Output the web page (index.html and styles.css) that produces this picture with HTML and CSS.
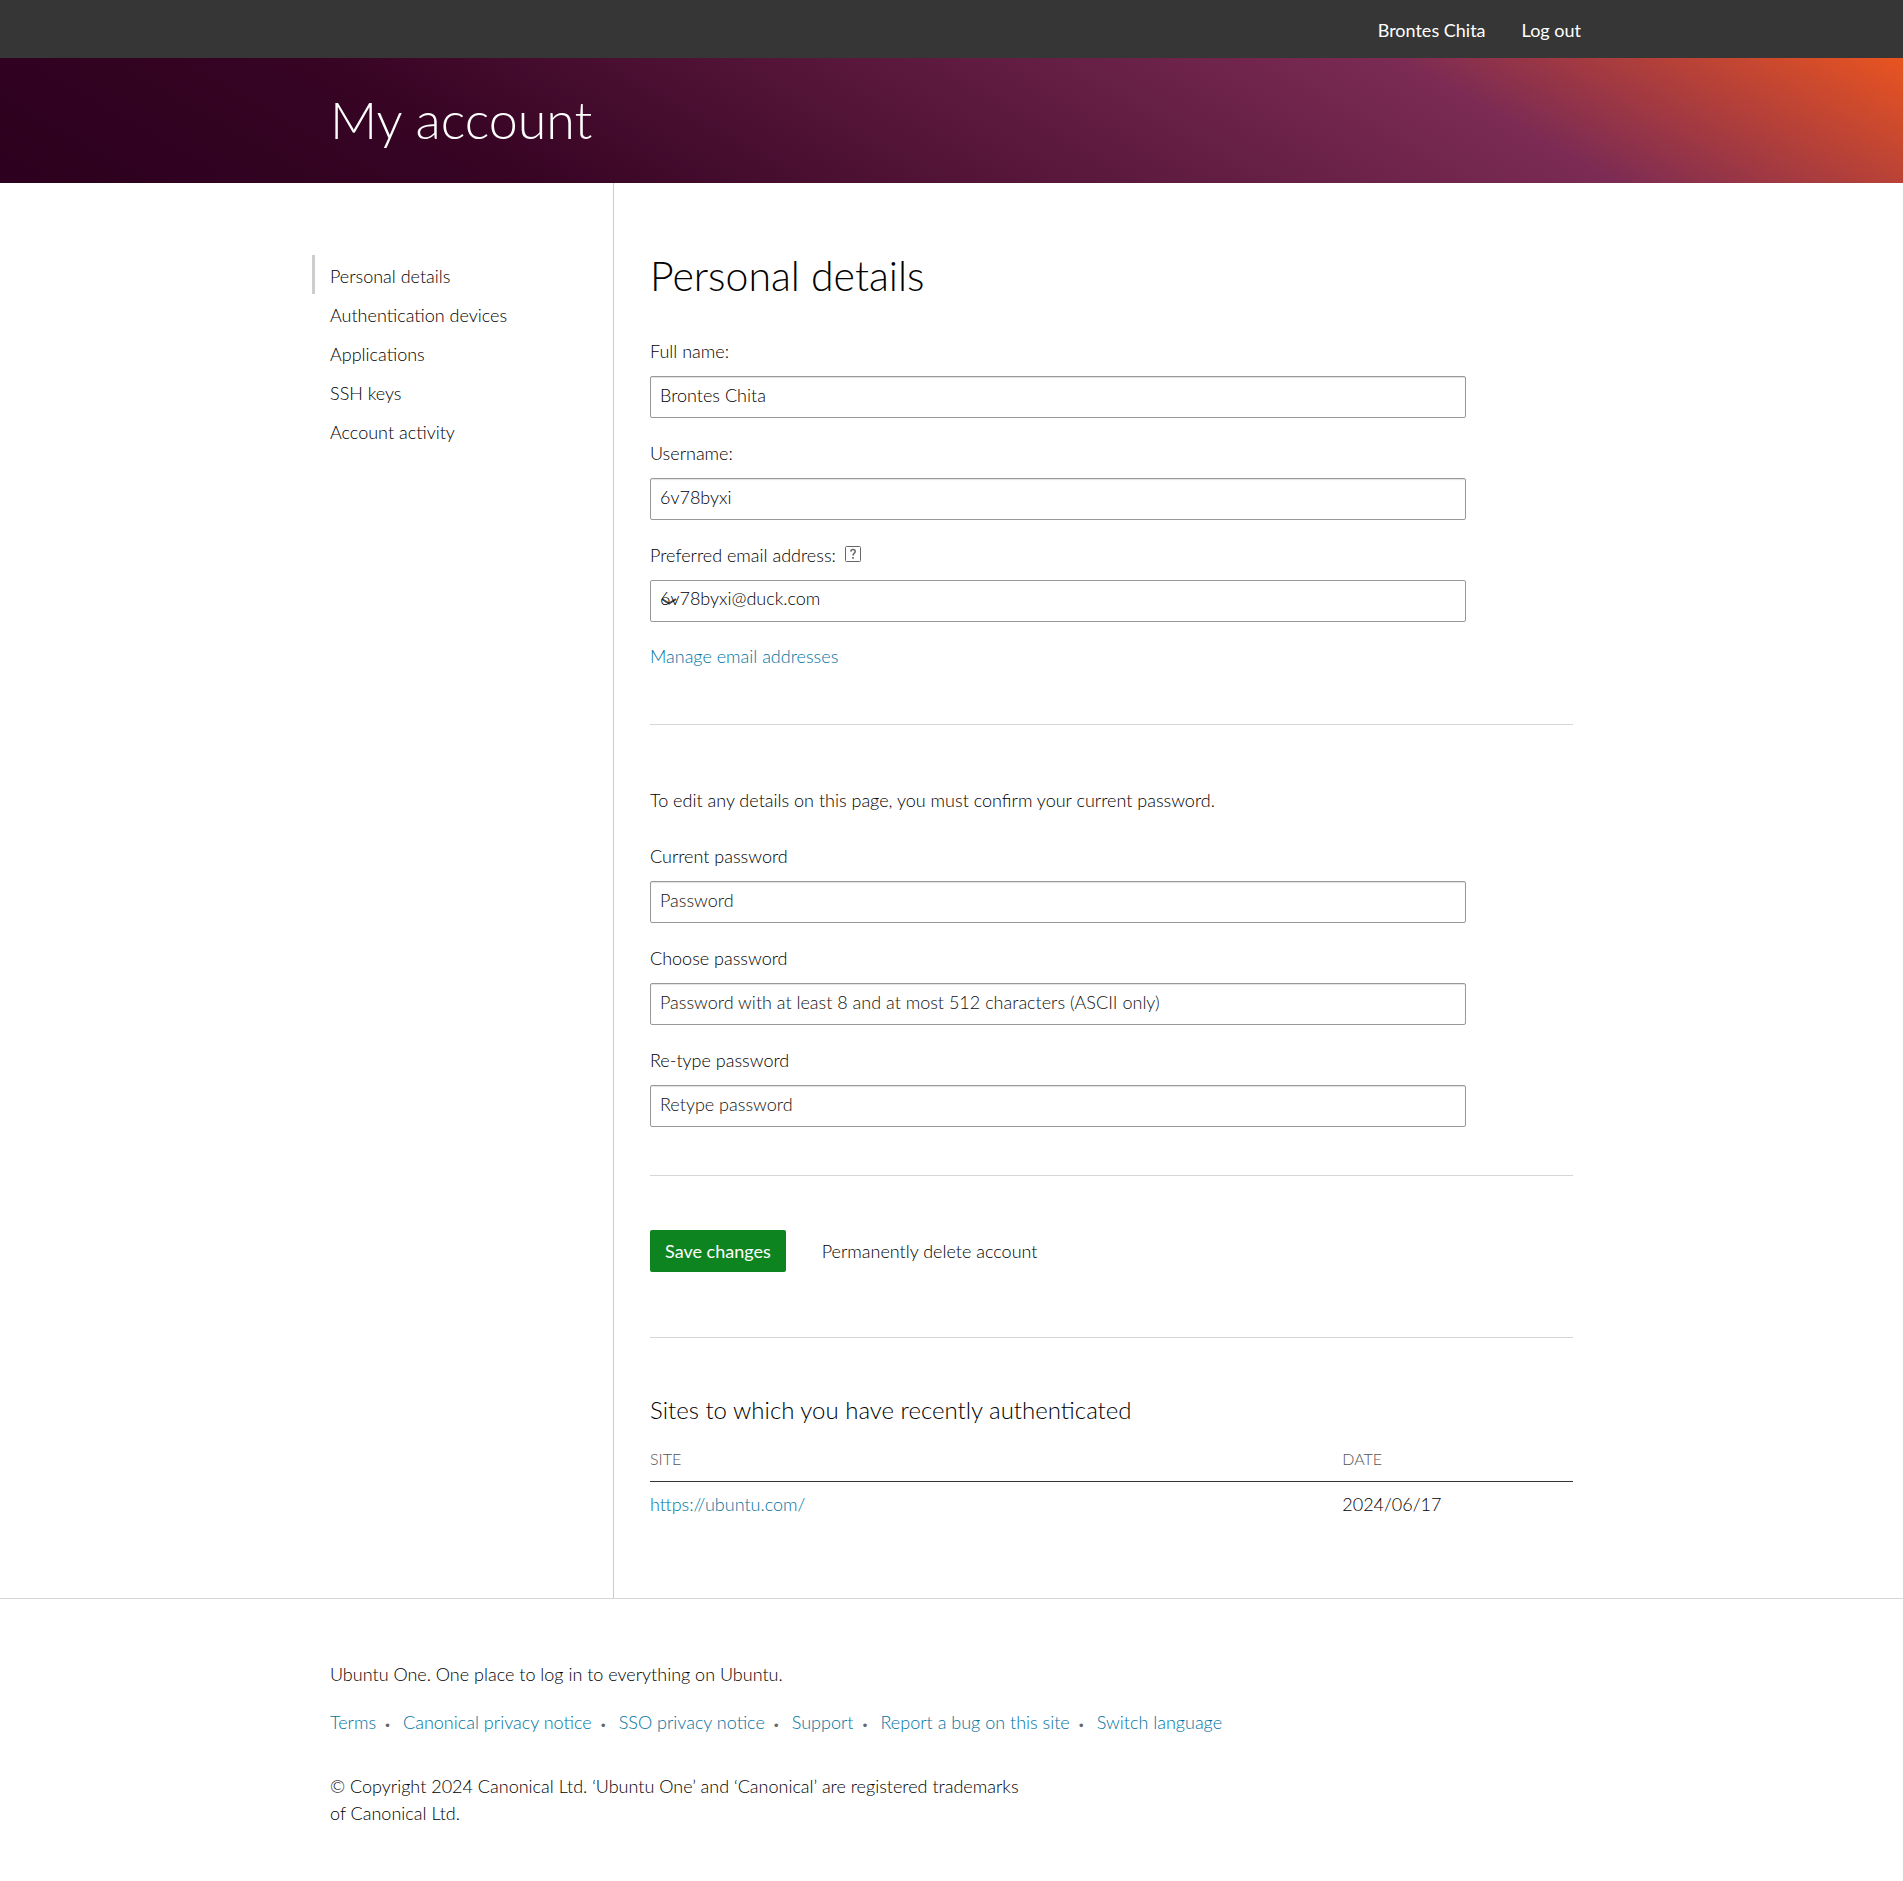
FILE: index.html
```html
<!DOCTYPE html>
<html lang="en">
<head>
  <meta charset="utf-8">
  <meta name="viewport" content="width=device-width, initial-scale=1">
  <title>Personal details</title>
  <link rel="stylesheet" href="styles.css">
</head>
<body>
  <header class="topbar">
    <nav class="container topbar-nav" aria-label="User">
      <a class="topbar-link" href="#">Brontes Chita</a>
      <a class="topbar-link" href="#">Log out</a>
    </nav>
  </header>
  <div class="banner">
    <div class="container">
      <h1 class="banner-title">My account</h1>
    </div>
  </div>
  <div class="container layout">
    <nav class="sidebar" aria-label="Account">
      <ul class="side-list">
        <li><a class="side-link is-active" href="#">Personal details</a></li>
        <li><a class="side-link" href="#">Authentication devices</a></li>
        <li><a class="side-link" href="#">Applications</a></li>
        <li><a class="side-link" href="#">SSH keys</a></li>
        <li><a class="side-link" href="#">Account activity</a></li>
      </ul>
    </nav>
    <main class="content">
      <form class="form">
        <h2 class="title">Personal details</h2>
        <div class="fields">
          <div class="field">
            <label class="label" for="fullname">Full name:</label>
            <input class="control" id="fullname" type="text" value="Brontes Chita">
          </div>
          <div class="field">
            <label class="label" for="username">Username:</label>
            <input class="control" id="username" type="text" value="6v78byxi">
          </div>
          <div class="field">
            <div class="label-row">
              <label class="label" for="email">Preferred email address:</label>
              <a class="help" href="#" aria-label="Help">
                <svg width="16" height="16" viewBox="0 0 16 16" fill="none" stroke="#666" aria-hidden="true">
                  <rect x="0.5" y="0.5" width="15" height="15" rx="1"/>
                  <path d="M5.8 5.6C5.9 4.3 6.8 3.6 8 3.6c1.300 0 2.200.8 2.200 1.900 0 1.700-2.200 1.900-2.200 4" stroke-width="1.500"/>
                  <path d="M8 11v1.700" stroke-width="1.700"/>
                </svg>
              </a>
            </div>
            <select class="control select" id="email"><option>6v78byxi@duck.com</option></select>
          </div>
        </div>
        <a class="link manage" href="#">Manage email addresses</a>
        <hr class="rule">
        <p class="note">To edit any details on this page, you must confirm your current password.</p>
        <div class="fields">
          <div class="field">
            <label class="label" for="current">Current password</label>
            <input class="control" id="current" type="password" placeholder="Password">
          </div>
          <div class="field">
            <label class="label" for="new">Choose password</label>
            <input class="control" id="new" type="password" placeholder="Password with at least 8 and at most 512 characters (ASCII only)">
          </div>
          <div class="field">
            <label class="label" for="retype">Re-type password</label>
            <input class="control" id="retype" type="password" placeholder="Retype password">
          </div>
        </div>
        <hr class="rule rule-actions">
        <div class="actions">
          <button class="button" type="submit">Save changes</button>
          <a class="delete" href="#">Permanently delete account</a>
        </div>
        <hr class="rule rule-sites">
      </form>
      <h3 class="subtitle">Sites to which you have recently authenticated</h3>
      <table class="sites">
        <thead><tr><th class="col-site">SITE</th><th>DATE</th></tr></thead>
        <tbody><tr><td><a class="link" href="#">https://ubuntu.com/</a></td><td>2024/06/17</td></tr></tbody>
      </table>
    </main>
  </div>
  <footer class="footer">
    <div class="container">
      <p class="tagline">Ubuntu One. One place to log in to everything on Ubuntu.</p>
      <ul class="footer-links">
        <li><a class="link" href="#">Terms</a></li>
        <li><a class="link" href="#">Canonical privacy notice</a></li>
        <li><a class="link" href="#">SSO privacy notice</a></li>
        <li><a class="link" href="#">Support</a></li>
        <li><a class="link" href="#">Report a bug on this site</a></li>
        <li><a class="link" href="#">Switch language</a></li>
      </ul>
      <p class="legal">© Copyright 2024 Canonical Ltd. ‘Ubuntu One’ and ‘Canonical’ are registered trademarks<br>of Canonical Ltd.</p>
    </div>
  </footer>
</body>
</html>
```

FILE: styles.css
```css
*,
*::before,
*::after {
  box-sizing: border-box;
}

body {
  margin: 0;
  background: #fff;
  color: #000;
  font: 300 18px/27px Lato, "Open Sans", sans-serif;
}

h1, h2, h3, p, ul {
  margin: 0;
  padding: 0;
}

ul {
  list-style: none;
}

.container {
  width: 100%;
  max-width: 1279px;
  margin: 0 auto;
  padding: 0 18px;
}

.link {
  color: #0073a0;
  text-decoration: none;
}

.topbar {
  background: #363636;
}

.topbar-nav {
  display: flex;
  justify-content: flex-end;
  gap: 36px;
  padding: 17px 10px 14px;
}

.topbar-link {
  color: #fff;
  font-weight: 400;
  text-decoration: none;
}

.banner {
  padding: 25px 0 28px;
  background: linear-gradient(30deg, #2c001e 0%, #370424 25%, #7b2b54 76%, #e95420 100%);
}

.banner-title {
  color: #fff;
  font-size: 52px;
  font-weight: 300;
  line-height: 72px;
}

.layout {
  display: flex;
}

.sidebar {
  flex: 0 0 283px;
  padding-top: 72px;
}

.side-list {
  margin-left: -18px;
}

.side-link {
  display: block;
  padding: 8px 0 4px 15px;
  border-left: 3px solid transparent;
  color: #000;
  text-decoration: none;
}

.side-link.is-active {
  border-color: #cdcdcd;
}

.content {
  flex: 1;
  min-width: 0;
  padding: 66px 0 72px 36px;
  border-left: 1px solid #cdcdcd;
}

.title {
  margin-bottom: 35px;
  font-size: 41px;
  font-weight: 300;
  line-height: 54px;
}

.fields {
  display: grid;
  gap: 22px;
  max-width: 816px;
}

.field {
  display: grid;
  gap: 11px;
}

.label-row {
  display: flex;
  gap: 9px;
}

.help {
  display: block;
  height: 16px;
  margin-top: 4px;
}

.help svg {
  display: block;
}

.control {
  width: 100%;
  height: 42px;
  padding: 0 9px 5px;
  border: 1px solid #999;
  border-radius: 2px;
  background: #fff;
  box-shadow: inset 0 1px 1px rgba(0, 0, 0, 0.12);
  color: #000;
  font: inherit;
}

.control::placeholder {
  color: #111;
  opacity: 1;
}

.select {
  appearance: none;
  background: #fff url("data:image/svg+xml,%3Csvg xmlns='http://www.w3.org/2000/svg' width='16' height='16' viewBox='0 0 16 16'%3E%3Cpath d='M1 6l7 4.500 7-4.500' fill='none' stroke='%23444' stroke-width='2'/%3E%3C/svg%3E") no-repeat 10px center;
  box-shadow: none;
}

.manage {
  display: inline-block;
  margin-top: 21px;
}

.rule {
  height: 1px;
  margin: 54px 0 62px;
  border: 0;
  background: #d6d6d6;
}

.note {
  margin-bottom: 29px;
}

.rule-actions {
  margin: 48px 0 54px;
}

.actions {
  display: flex;
  align-items: center;
  gap: 36px;
}

.button {
  height: 42px;
  padding: 0 15px;
  border: 0;
  border-radius: 2px;
  background: #0e8420;
  color: #fff;
  font: inherit;
  font-weight: 400;
}

.delete {
  color: #000;
  text-decoration: none;
}

.rule-sites {
  margin: 65px 0 54px;
}

.subtitle {
  margin-bottom: 17px;
  font-size: 24px;
  font-weight: 300;
  line-height: 36px;
}

.sites {
  width: 100%;
  border-collapse: collapse;
  table-layout: fixed;
}

.sites th {
  padding: 0 0 9px;
  border-bottom: 1px solid #333;
  color: #555;
  font-size: 16px;
  font-weight: 300;
  text-align: left;
}

.sites td {
  padding: 9px 0 8px;
}

.col-site {
  width: 75%;
}

.footer {
  padding: 62px 0 54px;
  border-top: 1px solid #d6d6d6;
}

.tagline {
  margin-bottom: 21px;
}

.footer-links {
  display: flex;
  flex-wrap: wrap;
  margin-bottom: 35px;
}

.footer-links li + li::before {
  content: "•";
  margin: 0 12px 0 8px;
  color: #666;
  font-size: 12px;
}
```
